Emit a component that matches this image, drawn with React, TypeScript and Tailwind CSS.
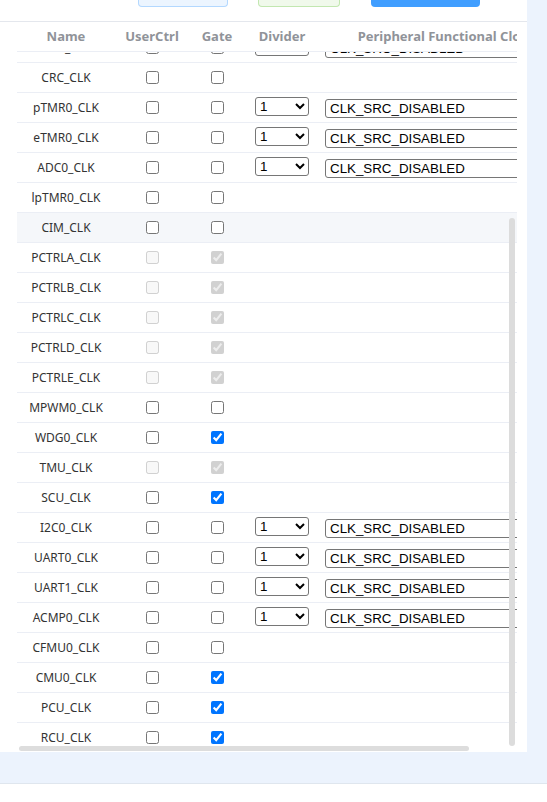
import React from "react";

type Row = {
  name: string;
  div?: boolean;
  locked?: boolean;
  gate?: boolean;
  hover?: boolean;
};

const rows: Row[] = [
  { name: "SPI0_CLK", div: true },
  { name: "CRC_CLK" },
  { name: "pTMR0_CLK", div: true },
  { name: "eTMR0_CLK", div: true },
  { name: "ADC0_CLK", div: true },
  { name: "lpTMR0_CLK" },
  { name: "CIM_CLK", hover: true },
  { name: "PCTRLA_CLK", locked: true },
  { name: "PCTRLB_CLK", locked: true },
  { name: "PCTRLC_CLK", locked: true },
  { name: "PCTRLD_CLK", locked: true },
  { name: "PCTRLE_CLK", locked: true },
  { name: "MPWM0_CLK" },
  { name: "WDG0_CLK", gate: true },
  { name: "TMU_CLK", locked: true },
  { name: "SCU_CLK", gate: true },
  { name: "I2C0_CLK", div: true },
  { name: "UART0_CLK", div: true },
  { name: "UART1_CLK", div: true },
  { name: "ACMP0_CLK", div: true },
  { name: "CFMU0_CLK" },
  { name: "CMU0_CLK", gate: true },
  { name: "PCU_CLK", gate: true },
  { name: "RCU_CLK", gate: true },
];

function TableRow({ row }: { row: Row }) {
  return (
    <div
      className={`flex h-[30px] w-[604px] items-center border-b border-[#ebeef5] ${
        row.hover ? "bg-[#f5f7fa]" : "bg-white"
      }`}
    >
      <div className="w-[98px] text-center text-[12px] text-[#333]">{row.name}</div>
      <div className="flex w-[74px] justify-center">
        <input
          type="checkbox"
          className="h-[13px] w-[13px]"
          disabled={row.locked}
          defaultChecked={false}
        />
      </div>
      <div className="flex w-[56px] justify-center">
        <input
          type="checkbox"
          className="h-[13px] w-[13px]"
          disabled={row.locked}
          defaultChecked={row.locked || row.gate}
        />
      </div>
      <div className="flex w-[74px] justify-center">
        {row.div && (
          <select className="h-[19px] w-[54px] -translate-y-px rounded-[3px] border border-[#767676] bg-white font-['Liberation_Sans',Arial,sans-serif] text-[13.333px] text-black">
            <option>1</option>
          </select>
        )}
      </div>
      <div className="w-[302px] px-[6px]">
        {row.div && (
          <select className="h-[19px] w-full -translate-y-px rounded-[3px] border border-[#767676] bg-white font-['Liberation_Sans',Arial,sans-serif] text-[13.333px] text-black">
            <option>CLK_SRC_DISABLED</option>
          </select>
        )}
      </div>
    </div>
  );
}

export default function App() {
  return (
    <div className="h-[802px] w-[547px] overflow-hidden bg-white font-['Noto_Sans',sans-serif]">
      <div className="flex h-[752px]">
        <div className="flex w-[527px] flex-col">
          {/* toolbar, scrolled mostly out of view */}
          <div className="flex h-[22px] gap-[30px] border-b border-[#e4e7ed] pl-[138px]">
            <div className="h-[7px] w-[90px] rounded-b-[4px] border border-t-0 border-[#b3d8ff] bg-[#ecf5ff]" />
            <div className="h-[7px] w-[82px] rounded-b-[4px] border border-t-0 border-[#c2e7b0] bg-[#f0f9eb]" />
            <div className="ml-px h-[7px] w-[109px] rounded-b-[4px] bg-[#409eff]" />
          </div>

          <div className="relative ml-[17px] h-[730px] w-[500px] overflow-hidden">
            <div className="flex h-[30px] w-[604px] items-center border-b border-[#ebeef5] bg-white text-[13px] font-bold text-[#909399]">
              <div className="w-[98px] text-center">Name</div>
              <div className="w-[74px] text-center">UserCtrl</div>
              <div className="w-[56px] text-center">Gate</div>
              <div className="w-[74px] text-center">Divider</div>
              <div className="w-[302px] text-center whitespace-nowrap">
                Peripheral Functional Clock Source
              </div>
            </div>
            <div className="h-[700px] overflow-hidden">
              <div className="-mt-[19px]">
                {rows.map((r) => (
                  <TableRow key={r.name} row={r} />
                ))}
              </div>
            </div>

            {/* scrollbars */}
            <div className="absolute left-[492px] top-[196px] h-[528px] w-[6px] rounded-full bg-[#dcdcdc]" />
            <div className="absolute left-[2px] top-[724px] h-[5px] w-[450px] rounded-full bg-[#dddddd]" />
          </div>
        </div>
        <div className="w-[20px] bg-[#ecf3fd]" />
      </div>
      <div className="h-[32px] border-b border-[#dfe6ee] bg-[#ecf3fd]" />
    </div>
  );
}
